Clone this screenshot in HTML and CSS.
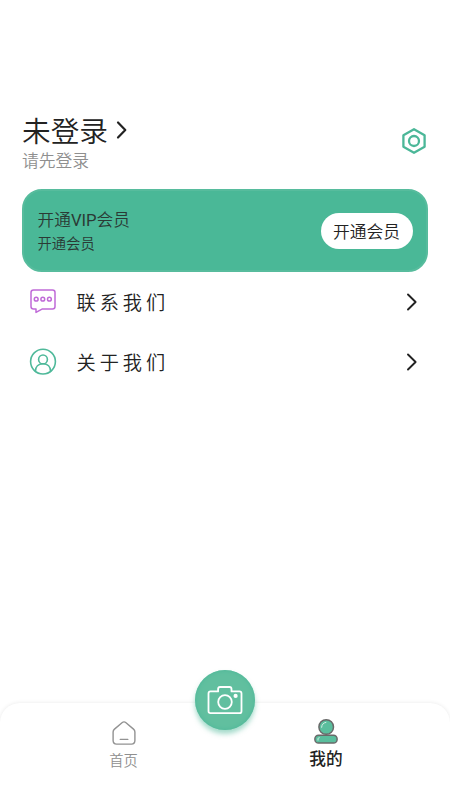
FILE: index.html
```html
<!DOCTYPE html>
<html lang="zh-CN">
<head>
<meta charset="utf-8">
<title>我的</title>
<link rel="stylesheet" href="styles.css">
</head>
<body>
<main class="page">
  <header class="profile">
    <div>
      <h1 class="name">未登录
        <svg class="name-arrow" width="12" height="20" viewBox="0 0 12 20"><path d="M2 2.5 9.3 10 2 17.5"/></svg>
      </h1>
      <p class="hint">请先登录</p>
    </div>
    <svg class="settings" width="28" height="28" viewBox="0 0 28 28"><path d="M14 2.2 24.6 8.2v11.6L14 25.8 3.4 19.8V8.2Z"/><circle cx="14" cy="14" r="5"/></svg>
  </header>

  <section class="vip">
    <div>
      <h2 class="vip-title">开通<span class="latin">VIP</span>会员</h2>
      <p class="vip-sub">开通会员</p>
    </div>
    <button class="vip-button">开通会员</button>
  </section>

  <nav class="menu">
    <a class="row">
      <svg class="row-icon chat" width="28" height="28" viewBox="0 0 28 28"><path d="M4.5 2.1h19q2.5 0 2.5 2.5v14q0 2.5-2.5 2.5H13L7 24.4v-3.3H4.5Q2 21.1 2 18.6v-14q0-2.5 2.5-2.5Z"/><circle cx="7.2" cy="11.2" r="1.9"/><circle cx="13.8" cy="11.2" r="1.9"/><circle cx="20.4" cy="11.2" r="1.9"/></svg>
      <span class="row-label">联系我们</span>
      <svg class="row-arrow" width="12" height="20" viewBox="0 0 12 20"><path d="M2 2.5 9.6 10 2 17.5"/></svg>
    </a>
    <a class="row">
      <svg class="row-icon person" width="28" height="28" viewBox="0 0 28 28"><circle cx="14" cy="13.6" r="12.4"/><circle cx="14" cy="11.4" r="4.4"/><path d="M6.4 23.4c0-4.6 3-7.6 7.6-7.6s7.6 3 7.6 7.6"/></svg>
      <span class="row-label">关于我们</span>
      <svg class="row-arrow" width="12" height="20" viewBox="0 0 12 20"><path d="M2 2.5 9.6 10 2 17.5"/></svg>
    </a>
  </nav>

  <footer class="tabs">
    <a class="tab">
      <svg class="home" width="26" height="26" viewBox="0 0 26 26"><path d="M11 2.7 3.5 9.1Q2.1 10.3 2.1 12v8.6q0 3.5 3.5 3.5h14.8q3.5 0 3.5-3.5V12q0-1.7-1.4-2.9L15 2.7q-2-1.6-4 0Z"/><path d="M9.3 19.4h7.5"/></svg>
      <span>首页</span>
    </a>
    <button class="camera" aria-label="拍照">
      <svg width="36" height="30" viewBox="0 0 36 30"><path d="M3.5 6.4h7.6V4Q11.1 2 13.1 2h9.4q2 0 2 2v2.4h8q2 0 2 2v17.8q0 2-2 2h-29q-2 0-2-2V8.4q0-2 2-2Z"/><circle cx="18" cy="17" r="6.8"/><circle class="dot" cx="28.6" cy="10.9" r="2.1"/></svg>
    </button>
    <a class="tab active">
      <svg width="26" height="26" viewBox="0 0 26 26"><circle cx="13.2" cy="9" r="7.3"/><rect x="1.9" y="17.2" width="22.2" height="7.9" rx="3.6"/><path class="shine" d="M8.6 9.3q.2-4.2 4.3-4.9M5 22.2v-1.5q0-1 1.3-1"/></svg>
      <span>我的</span>
    </a>
  </footer>
</main>
</body>
</html>
```
FILE: styles.css
```css
* { box-sizing: border-box; }
body {
  margin: 0;
  background: #fff;
  color: #222;
  font-family: "Noto Sans CJK SC", sans-serif;
  font-weight: 350;
}
h1, h2, p { margin: 0; font-weight: inherit; }
button { border: 0; padding: 0; font: inherit; color: inherit; }
svg { display: block; flex: none; fill: none; stroke-linecap: round; stroke-linejoin: round; }
.page { height: 801px; display: flex; flex-direction: column; padding-top: 112px; overflow: hidden; }

.profile { display: flex; justify-content: space-between; height: 77px; padding: 0 22px; }
.name { display: flex; align-items: center; gap: 8px; height: 36px; font-size: 28.7px; line-height: 36px; }
.name-arrow { stroke: #222; stroke-width: 2.2; }
.hint { font-size: 16.8px; line-height: 24px; color: #8f8f8f; }
.settings { margin-top: 15px; stroke: #4bb798; stroke-width: 2.3; }

.vip {
  display: flex;
  align-items: center;
  justify-content: space-between;
  height: 83px;
  margin: 0 22px;
  padding: 0 13.5px;
  border: 2px solid #57bc9d;
  border-radius: 20px;
  background: #4ab897;
}
.vip > div { color: #2b3a35; }
.vip-title { margin-top: -2px; font-size: 16.7px; line-height: 24px; }
.latin { font-family: Roboto, sans-serif; font-weight: 400; }
.vip-sub { font-size: 14.3px; line-height: 20px; }
.vip-button { width: 92px; height: 36px; border-radius: 18px; background: #fff; font-size: 16.8px; line-height: 36px; }

.menu { display: flex; flex-direction: column; }
.row { display: flex; align-items: center; height: 60px; padding: 0 32.5px 0 29px; }
.row-label { flex: 1; margin-left: 19.5px; font-size: 19.2px; line-height: 28px; letter-spacing: 4px; }
.row-arrow { stroke: #222; stroke-width: 1.9; }
.chat { stroke: #c06bd8; stroke-width: 1.5; }
.person { stroke: #4fb99a; stroke-width: 1.6; }

.tabs {
  display: flex;
  justify-content: space-between;
  height: 98px;
  margin-top: auto;
  padding: 0 95.5px 0 95px;
  border-radius: 20px 20px 0 0;
  background: #fff;
  box-shadow: 0 0 4px rgba(0, 0, 0, .09);
}
.tab { display: flex; flex-direction: column; align-items: center; width: 57px; padding-top: 17px; color: #8f8f8f; font-size: 14.3px; line-height: 20px; }
.tab span { margin-top: 4px; }
.home { stroke: #929292; stroke-width: 1.4; }
.active { padding-top: 15px; color: #222; font-size: 16.7px; font-weight: 500; }
.active svg { fill: #5abe9d; stroke: #696969; stroke-width: 1.5; }
.active .shine { fill: none; stroke: #d5eee5; stroke-width: 1; }
.camera {
  display: grid;
  place-items: center;
  width: 60px;
  height: 60px;
  margin-top: -33px;
  border-radius: 50%;
  background: #61bf9f;
  box-shadow: inset 0 0 4px #4bb798, 0 4px 5px rgba(75, 183, 152, .5);
}
.camera svg { margin-top: -1px; stroke: #fff; stroke-width: 1.8; }
.camera .dot { fill: #fff; stroke: none; }
```
